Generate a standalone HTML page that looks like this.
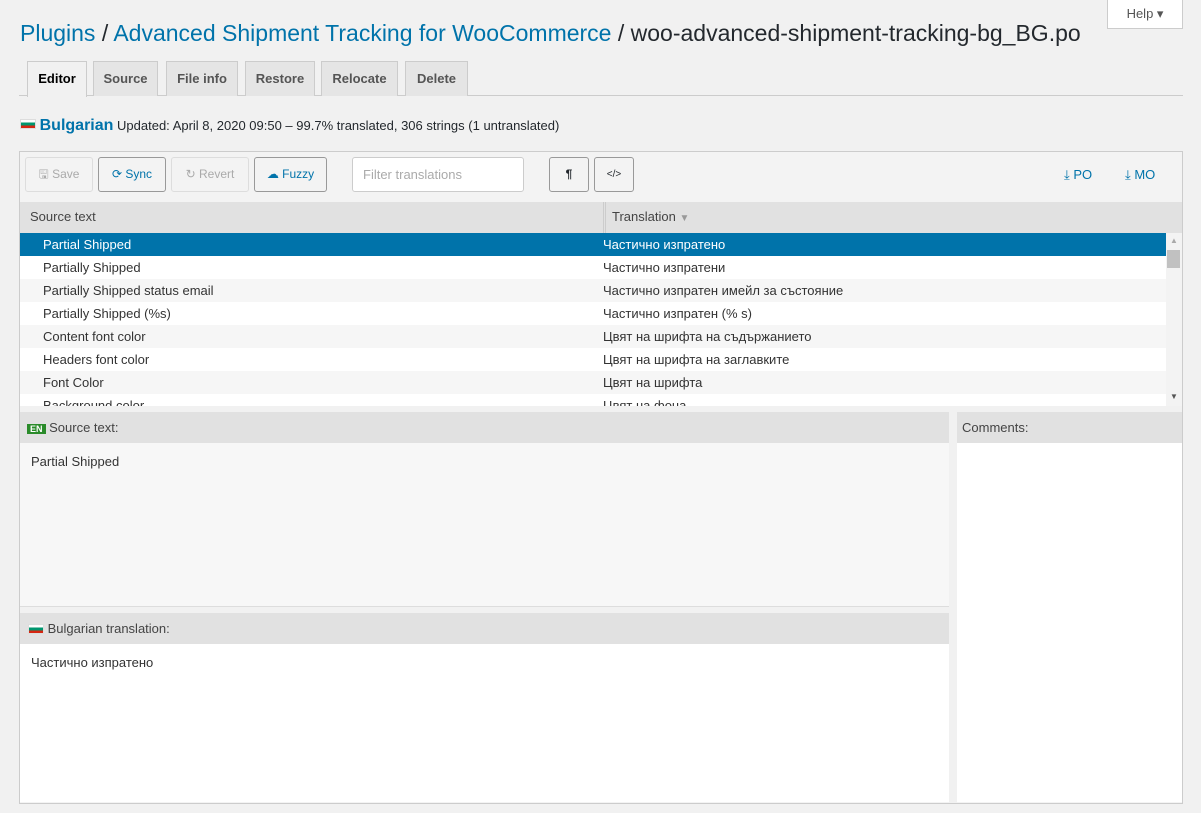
<!DOCTYPE html>
<html><head><meta charset="utf-8"><style>
*{box-sizing:border-box;margin:0;padding:0}
body{width:1201px;height:813px;background:#f1f1f1;font-family:"Liberation Sans",sans-serif;font-size:13px;color:#23282d;position:relative;overflow:hidden}
.abs{position:absolute}
.title{left:20px;top:20px;font-size:23px;color:#23282d;white-space:nowrap}
.title a{color:#0073aa;text-decoration:none}
.help{left:1107px;top:0;width:76px;height:29px;background:#fff;border:1px solid #ccc;border-top:none;color:#555;font-size:13px;text-align:center;line-height:28px}
.tabs{left:19px;top:95px;width:1164px;border-top:1px solid #ccc}
.tab{position:absolute;top:61px;height:35px;background:#e5e5e5;border:1px solid #ccc;border-bottom:none;font-size:13px;font-weight:bold;color:#555;text-align:center;line-height:33px}
.tab.on{background:#f1f1f1;color:#000;height:36px}
.flag{display:inline-block;width:16px;height:10px;background:linear-gradient(#fff 0 33%,#00966e 33% 66%,#d62612 66%);border:1px solid #ddd}
.box{left:19px;top:151px;width:1164px;height:653px;border:1px solid #ccc;background:#f3f3f3}
.btn{position:absolute;top:157px;height:35px;border:1px solid #999;border-radius:3px;background:#f3f3f3;color:#0073aa;font-size:12px;line-height:33px;text-align:center}
.btn.dis{border-color:#ddd;color:#aaa}
.row{position:absolute;left:20px;width:1146px;height:23px;line-height:23px;font-size:13px;color:#333}
.row span{position:absolute}
.row .s{left:23px}.row .t{left:583px}
.hdr{background:#e1e1e1;color:#444;font-size:13px}
</style></head><body>
<div class="abs title"><a>Plugins</a> / <a>Advanced Shipment Tracking for WooCommerce</a> / woo-advanced-shipment-tracking-bg_BG.po</div>
<div class="abs help">Help ▾</div>
<div class="abs tabs"></div>
<div class="tab on" style="left:27px;width:60px">Editor</div>
<div class="tab" style="left:93px;width:65px">Source</div>
<div class="tab" style="left:166px;width:72px">File info</div>
<div class="tab" style="left:245px;width:70px">Restore</div>
<div class="tab" style="left:321px;width:77px">Relocate</div>
<div class="tab" style="left:405px;width:63px">Delete</div>
<div class="abs" style="left:20px;top:117px;white-space:nowrap"><span class="flag" style="vertical-align:1px"></span> <b style="color:#0073aa;font-size:16px">Bulgarian</b> Updated: April 8, 2020 09:50 – 99.7% translated, 306 strings (1 untranslated)</div>
<div class="abs box"></div>
<div class="btn dis" style="left:25px;width:68px">🖫 Save</div>
<div class="btn" style="left:98px;width:68px">⟳ Sync</div>
<div class="btn dis" style="left:171px;width:78px">↻ Revert</div>
<div class="btn" style="left:254px;width:73px">☁ Fuzzy</div>
<div class="abs" style="left:352px;top:157px;width:172px;height:35px;background:#fff;border:1px solid #ccc;border-radius:3px;color:#aaa;line-height:33px;padding-left:10px">Filter translations</div>
<div class="btn" style="left:549px;width:40px;font-weight:bold;color:#23282d">¶</div>
<div class="btn" style="left:594px;width:40px;font-size:10px;color:#23282d">&lt;/&gt;</div>
<div class="abs" style="left:1064px;top:167px;color:#0073aa">⤓ PO</div>
<div class="abs" style="left:1125px;top:167px;color:#0073aa">⤓ MO</div>
<div class="row hdr" style="top:202px;width:1162px;height:31px;line-height:30px"><span style="left:10px">Source text</span><span style="left:583px;border-left:3px double #ccc;padding-left:6px">Translation <span style="position:static;color:#999;font-size:10px">▼</span></span></div>
<div class="row" style="top:233px;background:#0073aa;color:#fff"><span class="s">Partial Shipped</span><span class="t">Частично изпратено</span></div>
<div class="row" style="top:256px;background:#fff"><span class="s">Partially Shipped</span><span class="t">Частично изпратени</span></div>
<div class="row" style="top:279px;background:#f6f6f6"><span class="s">Partially Shipped status email</span><span class="t">Частично изпратен имейл за състояние</span></div>
<div class="row" style="top:302px;background:#fff"><span class="s">Partially Shipped (%s)</span><span class="t">Частично изпратен (% s)</span></div>
<div class="row" style="top:325px;background:#f6f6f6"><span class="s">Content font color</span><span class="t">Цвят на шрифта на съдържанието</span></div>
<div class="row" style="top:348px;background:#fff"><span class="s">Headers font color</span><span class="t">Цвят на шрифта на заглавките</span></div>
<div class="row" style="top:371px;background:#f6f6f6"><span class="s">Font Color</span><span class="t">Цвят на шрифта</span></div>
<div class="row" style="top:394px;height:12px;background:#fff;overflow:hidden"><span class="s">Background color</span><span class="t">Цвят на фона</span></div>
<div class="abs" style="left:1166px;top:233px;width:16px;height:173px;background:#f3f3f3"></div>
<div class="abs" style="left:1167px;top:250px;width:13px;height:18px;background:#c1c1c1"></div>
<div class="abs" style="left:1170px;top:236px;font-size:8px;color:#aaa">▲</div>
<div class="abs" style="left:1170px;top:392px;font-size:8px;color:#555">▼</div>
<div class="abs" style="left:20px;top:406px;width:1162px;height:6px;background:#f1f1f1"></div>
<div class="abs hdr" style="left:20px;top:412px;width:929px;height:31px;line-height:31px;padding-left:7px"><span style="background:#2a8b2a;color:#fff;font-size:9px;font-weight:bold;padding:0 3px">EN</span> Source text:</div>
<div class="abs" style="left:20px;top:443px;width:929px;height:163px;background:#f7f7f7;padding:11px 11px;color:#333">Partial Shipped</div>
<div class="abs" style="left:20px;top:606px;width:929px;height:7px;background:#f1f1f1;border-top:1px solid #ddd"></div>
<div class="abs hdr" style="left:20px;top:613px;width:929px;height:31px;line-height:31px;padding-left:8px"><span class="flag" style="vertical-align:-1px"></span> Bulgarian translation:</div>
<div class="abs" style="left:20px;top:644px;width:929px;height:158px;background:#fff;padding:11px 11px;color:#333">Частично изпратено</div>
<div class="abs" style="left:949px;top:412px;width:8px;height:391px;background:#f1f1f1"></div>
<div class="abs hdr" style="left:957px;top:412px;width:225px;height:31px;line-height:31px;padding-left:5px">Comments:</div>
<div class="abs" style="left:957px;top:443px;width:225px;height:359px;background:#fff"></div>
</body></html>
